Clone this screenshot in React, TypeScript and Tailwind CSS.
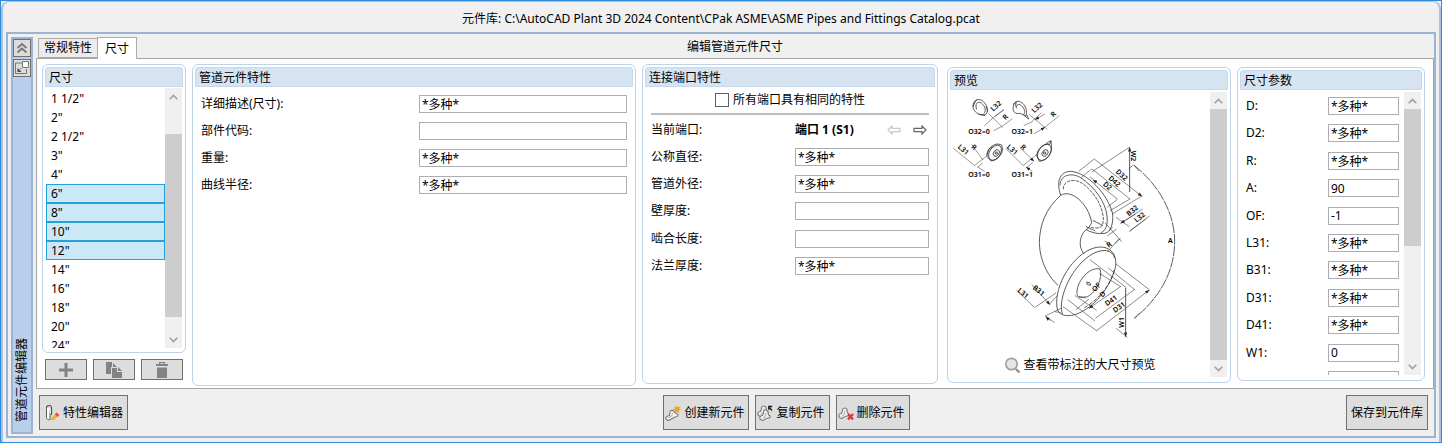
import { useState } from 'react';
import type { ReactNode } from 'react';
import clsx from 'clsx';

const SIZES = ['1 1/2"', '2"', '2 1/2"', '3"', '4"', '6"', '8"', '10"', '12"', '14"', '16"', '18"', '20"', '24"'];

const VARIES = '*多种*';

const COMPONENT_FIELDS = [
  { label: '详细描述(尺寸):', value: VARIES },
  { label: '部件代码:', value: '' },
  { label: '重量:', value: VARIES },
  { label: '曲线半径:', value: VARIES },
];

const PORT_FIELDS = [
  { label: '公称直径:', value: VARIES },
  { label: '管道外径:', value: VARIES },
  { label: '壁厚度:', value: '' },
  { label: '啮合长度:', value: '' },
  { label: '法兰厚度:', value: VARIES },
];

const SIZE_PARAMS = [
  { label: 'D:', value: VARIES },
  { label: 'D2:', value: VARIES },
  { label: 'R:', value: VARIES },
  { label: 'A:', value: '90' },
  { label: 'OF:', value: '-1' },
  { label: 'L31:', value: VARIES },
  { label: 'B31:', value: VARIES },
  { label: 'D31:', value: VARIES },
  { label: 'D41:', value: VARIES },
  { label: 'W1:', value: '0' },
];

interface PanelProps {
  title: string;
  className?: string;
  children: ReactNode;
}

function Panel({ title, className, children }: PanelProps) {
  return (
    <section
      className={clsx(
        'flex min-h-0 min-w-0 flex-col overflow-hidden rounded-md border border-[#bcd3ec] bg-white p-[2px]',
        className,
      )}
    >
      <h2 className="h-5 shrink-0 rounded-t-[3px] border border-[#c5d8ee] bg-[#d6e3f1] pl-[3px] leading-5">{title}</h2>
      {children}
    </section>
  );
}

interface FieldProps {
  id: string;
  label: string;
  value: string;
  inputClass: string;
}

function Field({ id, label, value, inputClass }: FieldProps) {
  return (
    <div className="flex items-center justify-between">
      <label htmlFor={id}>{label}</label>
      <input
        id={id}
        type="text"
        defaultValue={value}
        className={clsx('h-[18px] rounded-none border border-[#abadb3] bg-white px-[2px] leading-4 outline-none', inputClass)}
      />
    </div>
  );
}

function Chevron({ up }: { up?: boolean }) {
  return (
    <svg width="9" height="6" viewBox="0 0 9 6" fill="none" stroke="#a0a0a0" strokeWidth="1.6">
      <path d={up ? 'M.7 5.2 4.5 1.4 8.3 5.2' : 'M.7.8 4.5 4.6 8.3.8'} />
    </svg>
  );
}

function ScrollBar({ children }: { children: ReactNode }) {
  return (
    <div className="flex w-[17px] shrink-0 flex-col bg-[#f0f0f0]">
      <button type="button" aria-label="向上滚动" className="flex h-[17px] shrink-0 items-center justify-center">
        <Chevron up />
      </button>
      <div className="flex min-h-0 flex-1 flex-col">{children}</div>
      <button type="button" aria-label="向下滚动" className="flex h-[17px] shrink-0 items-center justify-center">
        <Chevron />
      </button>
    </div>
  );
}

function ElbowBase() {
  return (
    <>
      <path
        d="M2.500 13.500C1 12 2 9.500 4.500 9.500L5.500 7C5 3.500 9.500 3 10 6L10.500 9C13 9.500 12.500 12.500 10 12C8 12 6 14.500 4.500 14.500Z"
        fill="#f4f4f4"
        stroke="#777"
        strokeWidth="1.1"
        strokeLinejoin="round"
      />
      <path d="M4.500 12.500C7 11.500 8 9.500 8 6.500" fill="none" stroke="#b5b5b5" strokeWidth="1.2" />
    </>
  );
}

function PropertyIcon() {
  return (
    <svg width="16" height="18" viewBox="0 0 16 18" fill="none">
      <path d="M2.500 4V13.500C2.500 15.500 4 16 6 15.500V5" fill="#fff" stroke="#555" />
      <path d="M2.500 4C2.500.8 7.500.8 7.500 4V11" fill="#fff" stroke="#555" strokeWidth="1.2" />
      <path d="M4 3.500 6 2.500V8" stroke="#ccc" />
      <path d="m7 16.500.8-3 3.600-3.600 2.400 2.400-3.600 3.600z" fill="#f3b13c" />
      <path d="m10.800 10.300 1.800-1.900 2.800 2.500-1.900 2z" fill="#f0463c" />
    </svg>
  );
}

function CreateIcon() {
  return (
    <svg width="16" height="18" viewBox="0 0 16 18" fill="none">
      <path
        d="M1 15C0 13.500 2 12 4.500 11.500L5 8C5.500 5.500 9 6 9.500 8.500L11 9.500C14 10 13.500 12 11.500 12.500C8 13 5 16.800 2.500 16.500Z"
        fill="#f5f5f5"
        stroke="#777"
        strokeWidth="1.1"
      />
      <path d="M3 14C6 13 7.500 11 7.500 9" stroke="#b5b5b5" strokeWidth="1.2" />
      <path d="m12 1 .9 2.300 2.500-.9-1.100 2.300 1.700 1.100-2.100.8.300 2.400L12 7.800 9.900 9l.3-2.400-2.200-.9 1.900-1.100-1-2.200 2.300.9z" fill="#f6a21a" />
    </svg>
  );
}

function CopyElbowIcon() {
  return (
    <svg width="16" height="18" viewBox="0 0 16 18" fill="none">
      <g transform="translate(-1 -2)">
        <ElbowBase />
      </g>
      <g transform="translate(1 2)">
        <ElbowBase />
      </g>
      <path d="m15 6.500-2.700-3M11.800 5.700V2.500h3.400" stroke="#222" strokeWidth="1.400" />
    </svg>
  );
}

function DeleteElbowIcon() {
  return (
    <svg width="16" height="18" viewBox="0 0 16 18" fill="none">
      <g transform="translate(-1 0)">
        <ElbowBase />
      </g>
      <path d="m10 10 5 5.500m0-5.500-5 5.500" stroke="#ee2f2f" strokeWidth="2.400" />
    </svg>
  );
}

function MagnifierIcon() {
  return (
    <svg width="17" height="17" viewBox="0 0 17 17" fill="none">
      <path d="m12 12 3.500 3.500" stroke="#a88e78" strokeWidth="2.400" />
      <circle cx="7.500" cy="7" r="5.700" fill="#e6e6e6" stroke="#a0a0a0" strokeWidth="1.700" />
    </svg>
  );
}

function PortArrow({ left, color }: { left?: boolean; color: string }) {
  return (
    <svg width="14" height="10" viewBox="0 0 14 10" fill="none" stroke={color} strokeWidth="1.200">
      <path d={left ? 'M1 5 5 1V3.300H13V6.700H5V9Z' : 'M13 5 9 1V3.300H1V6.700H9V9Z'} />
    </svg>
  );
}

function ToolButton({ icon, className, children }: { icon?: ReactNode; className: string; children: ReactNode }) {
  return (
    <button
      type="button"
      className={clsx(
        'flex h-[35px] items-center gap-[3px] border border-[#707070] bg-[#dddddd] whitespace-nowrap',
        className,
      )}
    >
      {icon}
      {children}
    </button>
  );
}

// [text, x, y, angle]
const MAIN_LABELS: [string, number, number, number][] = [
  ['D32', 365, 135, 42],
  ['D42', 343, 154, 42],
  ['D2', 322, 168, 42],
  ['B32', 397, 242, -38],
  ['L32', 419, 262, -38],
  ['W2', 399, 78, 90],
  ['A', 511, 333, 0],
  ['R', 327, 344, -38],
  ['L31', 69, 490, 40],
  ['B31', 116, 482, 40],
  ['OF', 289, 472, -45],
  ['D', 308, 493, -45],
  ['D41', 333, 512, -35],
  ['D31', 357, 532, -35],
  ['W1', 366, 577, -90],
];

const DETAIL_LABELS: [string, number, number, number][] = [
  ['L32', 168, 138, -42],
  ['R', 196, 171, -42],
  ['O32=0', 117, 214, 0],
  ['L32', 291, 143, -42],
  ['R', 340, 163, -42],
  ['O32=1', 247, 214, 0],
  ['L31', 70, 269, 42],
  ['R', 102, 262, 42],
  ['O31=0', 117, 343, 0],
  ['L31', 217, 269, 42],
  ['R', 250, 262, 42],
  ['O31=1', 247, 343, 0],
];

function DrawingLabels({ items }: { items: [string, number, number, number][] }) {
  return (
    <g fill="#000" stroke="none" fontSize="21" fontWeight="600" textAnchor="middle">
      {items.map(([text, x, y, angle]) => (
        <text key={`${text}-${x}`} transform={`translate(${x} ${y}) rotate(${angle})`} dy="7">
          {text}
        </text>
      ))}
    </g>
  );
}

function ElbowDrawing() {
  return (
    <svg width="260" height="254" viewBox="0 0 260 254" fill="none" stroke="#333" className="shrink-0">
      <defs>
        <marker id="tip" viewBox="0 0 10 8" markerWidth="14" markerHeight="10" refX="10" refY="4" orient="auto-start-reverse" markerUnits="userSpaceOnUse">
          <path d="M0 0 10 4 0 8Z" fill="#222" stroke="none" />
        </marker>
      </defs>

      {/* end type details */}
      <g transform="translate(-10 -32) scale(.3333)" strokeWidth="2.400">
        <path d="M100 145C96 125 108 115 124 120C140 130 147 150 139 162C122 168 105 160 100 145Z" />
        <path d="M110 148C104 132 112 123 124 129C136 139 139 152 132 160M98 140 106 126M112 118 104 126M116 163 136 167M139 139 143 155" />
        <path d="M220 140C220 125 232 121 242 126C257 134 264 155 257 168L240 160C226 163 216 155 220 140Z" />
        <path d="M229 145C228 133 236 130 245 137C255 148 256 156 251 164M220 133 229 127 226 139M252 166 266 177 260 164" />
        <path d="M145 160 188 202M155 176 182 156M182 156 192 149M184 201 217 176M268 164 322 208M276 184 305 158M313 203 358 167" strokeWidth="1.500" />
        <path d="M133 197 157 176M161 212 184 200M251 197 277 185M282 221 315 202" markerEnd="url(#tip)" strokeWidth="1.500" />
        <path d="M192 149 165 170M315 162 285 179" markerEnd="url(#tip)" strokeWidth="1.500" />
        <path d="M141 289C139 270 155 253 174 252L185 255 188 269C183 290 170 301 153 303Z" />
        <ellipse cx="165" cy="278" rx="25" ry="16" transform="rotate(-56 165 278)" />
        <ellipse cx="169" cy="279" rx="11" ry="8" transform="rotate(-50 169 279)" />
        <path d="M166 276h6v6h-6zM141 284 147 267 160 260" />
        <path d="M290 287C292 265 313 249 329 253L333 242 335 268C330 291 316 302 298 304Z" />
        <ellipse cx="313" cy="277" rx="27" ry="17" transform="rotate(-56 313 277)" />
        <ellipse cx="315" cy="279" rx="11" ry="8" transform="rotate(-50 315 279)" />
        <path d="M311 276h6v6h-6zM317 252 332 242" />
        <path d="M40 265 103 316M95 253 129 300M197 265 249 316M239 262 282 304" markerEnd="url(#tip)" strokeWidth="1.500" />
        <path d="M103 317 143 286M112 322 128 309M249 317 291 283M260 323 279 307" strokeWidth="1.500" />
        <path d="M134 334 113 321M277 334 258 321" markerEnd="url(#tip)" strokeWidth="1.500" />
        <DrawingLabels items={DETAIL_LABELS} />
      </g>

      <g transform="translate(50 38) scale(.3333)" strokeWidth="2.400">
        {/* elbow body */}
        <path d="M182 196C138 235 118 285 118 340C120 400 150 445 174 466" />
        <path d="M182 196C214 176 266 222 275 278C270 290 264 296 258 299C237 320 235 350 252 372" />
        {/* upper flange */}
        <path d="M182 196C166 147 184 124 213 124C261 128 323 190 338 252C340 282 333 305 315 310C293 313 272 307 259 299" />
        <path d="M180 166C181 133 216 128 240 142C285 170 318 220 321 258C324 283 318 302 303 308" />
        <path d="M190 178C188 151 225 142 251 163C290 194 310 236 310 270C309 286 304 294 290 294C280 294 272 293 267 290" strokeDasharray="10 3" />
        <path d="M278 271 309 287M258 290 286 303" />
        {/* lower flange */}
        <path d="M171 532C162 465 219 373 282 354C326 342 354 370 346 413C327 488 258 556 205 557C184 557 173 547 171 532Z" />
        <path d="M187 552C172 501 219 402 281 370C310 355 338 360 344 384" />
        <path d="M300 417C266 410 235 454 232 477C226 509 244 502 263 500C289 485 309 445 300 417Z" />
        <path d="M343 420C328 475 286 516 250 535" strokeDasharray="12 5" />
        <path d="M260 456 270 459 272 466 262 464Z" />
        {/* sweep angle */}
        <path d="M402 106C478 166 524 250 524 335C524 425 478 505 403 565" strokeDasharray="32 3" />

        {/* dimensions */}
        <g strokeWidth="1.700">
          <path d="M236 124 284 86M244 142 275 117M270 140 280 149M275 126 388 52M322 232 352 208M330 242 390 207M337 252 427 197M400 105 386 117M348 262 388 290M362 280 428 237M388 305 449 258" />
          <path d="M315 278 365 335M322 318 350 297M338 291 327 302M314 333 333 343M324 364 358 326" />
          <path d="M270 389 379 473M298 430 362 470M325 414 405 480M348 402 449 480M224 496 290 541M203 509 285 573M189 530 291 603M348 595 382 622" />
          <path d="M105 532 168 489M148 523 172 497M136 558 183 535M136 558 164 578M236 499 258 504M228 539 266 508" />
          <path d="M50 481 103 532M95 464 150 524" markerEnd="url(#tip)" />
          <path d="M279 149 352 207M276 117 390 207M284 88 426 199" markerStart="url(#tip)" markerEnd="url(#tip)" />
          <path d="M362 280 407 252M389 303 437 267M344 340 362 325" markerStart="url(#tip)" />
          <path d="M267 535 363 469M286 565 404 478M290 602 448 480" markerStart="url(#tip)" markerEnd="url(#tip)" />
          <path d="M389 52V186M377 474V620" markerStart="url(#tip)" markerEnd="url(#tip)" strokeWidth="2.500" />
          <path d="M417 123 402 106M419 549 403 565M165 545 182 548M151 573 137 560" markerEnd="url(#tip)" />
        </g>
        <DrawingLabels items={MAIN_LABELS} />
      </g>
    </svg>
  );
}

function SideBar() {
  return (
    <aside className="flex w-[22px] shrink-0 flex-col items-center gap-[2px] border-2 border-[#9ab4d2] bg-[#b9d0ec]">
      <button type="button" aria-label="折叠" className="flex h-[18px] w-[18px] shrink-0 items-center justify-center border border-[#707070] bg-[#dddddd]">
        <svg width="12" height="12" viewBox="0 0 12 12" fill="none" stroke="#777" strokeWidth="1.700">
          <path d="M1.500 6 6 2l4.500 4M1.500 10.500l4.500-4 4.500 4" />
        </svg>
      </button>
      <button type="button" aria-label="浮动" className="flex h-[18px] w-[18px] shrink-0 items-center justify-center border border-[#707070] bg-[#dddddd]">
        <svg width="16" height="16" viewBox="0 0 16 16" fill="none" stroke="#777">
          <path d="M8 3H1.500V13.500H12.500V9" />
          <path d="M8.500 1.500h6v6h-6z" fill="#fff" />
          <path d="M3.500 8v4h4z" fill="#444" stroke="none" />
          <path d="m5 10.500 2.500-2.500" />
        </svg>
      </button>
      <span className="mt-auto mb-[10px] rotate-180 leading-[18px] whitespace-nowrap [text-orientation:sideways] [writing-mode:vertical-rl]">
        管道元件编辑器
      </span>
    </aside>
  );
}

function SizeList() {
  const [selected, setSelected] = useState(['6"', '8"', '10"', '12"']);

  const toggle = (size: string) =>
    setSelected((prev) => (prev.includes(size) ? prev.filter((s) => s !== size) : [...prev, size]));

  return (
    <div className="flex min-h-0 flex-col gap-[6px]">
      <Panel title="尺寸" className="flex-1">
        <div className="mx-[1px] mt-[1px] mb-[2px] flex min-h-0 flex-1">
          <ul className="min-w-0 flex-1 overflow-hidden pt-[1px]">
            {SIZES.map((size) => (
              <li key={size}>
                <button
                  type="button"
                  onClick={() => toggle(size)}
                  className={clsx(
                    'block h-[19px] w-full border px-1 text-left leading-[18px]',
                    selected.includes(size) ? 'border-[#26a0da] bg-[#cbe8f6]' : 'border-transparent',
                  )}
                >
                  {size}
                </button>
              </li>
            ))}
          </ul>
          <ScrollBar>
            <div className="grow-[29]" />
            <div className="grow-[183] bg-[#cdcdcd]" />
            <div className="grow-[14]" />
          </ScrollBar>
        </div>
      </Panel>
      <div className="mb-2 flex gap-[6px] px-[3px]">
        <button type="button" aria-label="添加" className="flex h-[21px] flex-1 items-center justify-center border border-[#707070] bg-[#dddddd]">
          <svg width="14" height="14" viewBox="0 0 14 14" fill="#838383">
            <path d="M5.500 0h3v5.500H14v3H8.500V14h-3V8.500H0v-3h5.500z" />
          </svg>
        </button>
        <button type="button" aria-label="复制" className="flex h-[21px] flex-1 items-center justify-center border border-[#707070] bg-[#dddddd]">
          <svg width="18" height="16" viewBox="0 0 18 16" fill="#838383">
            <path d="M1 0h6v5H6v7H1zM8 1l4 4H8zM7 6h5v4h5v6H7zM13 5l4 4h-4z" />
          </svg>
        </button>
        <button type="button" aria-label="删除" className="flex h-[21px] flex-1 items-center justify-center border border-[#707070] bg-[#dddddd]">
          <svg width="14" height="16" viewBox="0 0 14 16" fill="#838383">
            <path d="M4 0h6v2h3v2H1V2h3zM5.500 1v1h3V1zM2 5.500h10V16H2z" fillRule="evenodd" />
          </svg>
        </button>
      </div>
    </div>
  );
}

export default function App() {
  return (
    <div className="flex h-screen flex-col border border-[#2f8ad8] bg-[#f0f0f0] font-['Noto_Sans','Noto_Sans_CJK_SC',sans-serif] text-[12px] text-black">
      <div className="flex min-h-0 flex-1 flex-col rounded-t-lg border-x-2 border-t border-[#a9c0de] px-[3px] pb-1">
        <header className="flex h-[30px] shrink-0 items-center justify-center pt-1">
          <h1>元件库: C:\AutoCAD Plant 3D 2024 Content\CPak ASME\ASME Pipes and Fittings Catalog.pcat</h1>
        </header>

        <div className="flex min-h-0 flex-1 gap-[3px] border-2 border-[#9ab4d2] pt-[3px] pl-[3px]">
          <div className="flex pb-[2px]">
            <SideBar />
          </div>

          <main className="flex min-w-0 flex-1 flex-col">
            <div className="grid h-[21px] shrink-0 grid-cols-[1fr_auto_1fr]">
              <div role="tablist" className="z-10 flex items-end pl-[2px]">
                <button type="button" role="tab" aria-selected="false" className="h-5 border border-[#acacac] bg-[#ececec] px-[5px]">
                  常规特性
                </button>
                <button
                  type="button"
                  role="tab"
                  aria-selected="true"
                  className="-mb-px -ml-px h-[22px] border border-b-0 border-[#acacac] bg-white px-[7px]"
                >
                  尺寸
                </button>
              </div>
              <h2 className="leading-5">编辑管道元件尺寸</h2>
              <div />
            </div>

            <div className="grid min-h-0 flex-1 grid-cols-[144px_minmax(0,1fr)_296px_293px_194px] grid-rows-[minmax(0,1fr)] border border-[#a5a5a5] bg-white pt-[5px] pr-2 pl-[5px]">
              <SizeList />

              <Panel title="管道元件特性" className="mr-[6px] mb-[2px] ml-[6px]">
                <div className="grid h-[112px] auto-rows-fr pt-[3px] pr-[6px] pl-[6px]">
                  {COMPONENT_FIELDS.map((field, i) => (
                    <Field key={field.label} id={`component-${i}`} inputClass="w-[208px]" {...field} />
                  ))}
                </div>
              </Panel>

              <Panel title="连接端口特性" className="mb-1">
                <div className="flex flex-col px-[6px]">
                  <label className="flex h-7 items-center justify-center gap-1 border-b-2 border-[#bdbdbd]">
                    <input type="checkbox" className="h-[14px] w-[14px] appearance-none border border-[#606060] bg-white" />
                    所有端口具有相同的特性
                  </label>
                  <div className="flex h-7 items-center pt-[2px]">
                    <span className="w-36">当前端口:</span>
                    <span className="font-bold">端口 1 (S1)</span>
                    <div className="mr-[2px] ml-auto flex gap-3">
                      <button type="button" aria-label="上一个端口" disabled>
                        <PortArrow left color="#c8c8c8" />
                      </button>
                      <button type="button" aria-label="下一个端口">
                        <PortArrow color="#666" />
                      </button>
                    </div>
                  </div>
                  <div className="grid h-[137px] auto-rows-fr">
                    {PORT_FIELDS.map((field, i) => (
                      <Field key={field.label} id={`port-${i}`} inputClass="w-[134px]" {...field} />
                    ))}
                  </div>
                </div>
              </Panel>

              <Panel title="预览" className="mt-[3px] mb-[5px] ml-[9px]">
                <div className="mt-[2px] mr-[1px] mb-[3px] flex min-h-0 flex-1">
                  <div className="flex min-w-0 flex-1 flex-col items-center overflow-hidden">
                    <ElbowDrawing />
                    <button type="button" className="mt-[10px] flex items-center gap-[2px] whitespace-nowrap">
                      <MagnifierIcon />
                      查看带标注的大尺寸预览
                    </button>
                  </div>
                  <ScrollBar>
                    <div className="flex-1 bg-[#cdcdcd]" />
                  </ScrollBar>
                </div>
              </Panel>

              <Panel title="尺寸参数" className="mt-[3px] mb-[7px] ml-[6px]">
                <div className="mt-[2px] mr-[1px] mb-[3px] flex min-h-0 flex-1">
                  <div className="min-w-0 flex-1 overflow-hidden pr-[5px] pl-[6px]">
                    <div className="grid h-[302px] auto-rows-fr">
                      {SIZE_PARAMS.map((field, i) => (
                        <Field key={field.label} id={`param-${i}`} inputClass="w-[71px]" {...field} />
                      ))}
                      <div className="flex items-center justify-end">
                        <input type="text" aria-label="W2" className="h-[18px] w-[71px] border border-[#abadb3] bg-white px-[2px]" />
                      </div>
                    </div>
                  </div>
                  <ScrollBar>
                    <div className="grow-[135] bg-[#cdcdcd]" />
                    <div className="grow-[110]" />
                  </ScrollBar>
                </div>
              </Panel>
            </div>

            <footer className="grid shrink-0 grid-cols-[1fr_auto_1fr] pt-[6px] pr-[6px] pb-[6px] pl-[3px]">
              <div className="flex">
                <ToolButton icon={<PropertyIcon />} className="pr-[4px] pl-[4px]">
                  特性编辑器
                </ToolButton>
              </div>
              <div className="flex gap-[6px] pl-[106px]">
                <ToolButton icon={<CreateIcon />} className="pr-[4px] pl-px">
                  创建新元件
                </ToolButton>
                <ToolButton icon={<CopyElbowIcon />} className="pr-[4px] pl-px">
                  复制元件
                </ToolButton>
                <ToolButton icon={<DeleteElbowIcon />} className="pr-[4px] pl-px">
                  删除元件
                </ToolButton>
              </div>
              <div className="flex justify-end">
                <ToolButton className="px-1">保存到元件库</ToolButton>
              </div>
            </footer>
          </main>
        </div>
      </div>
    </div>
  );
}
